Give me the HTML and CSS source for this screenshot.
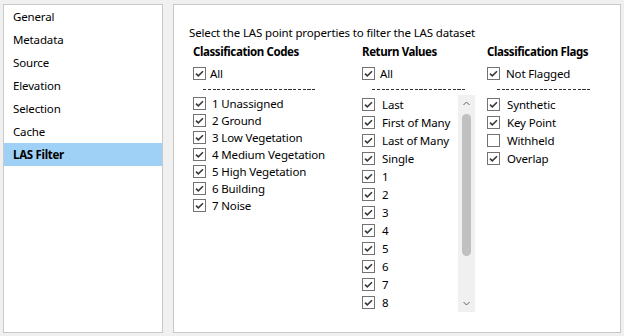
FILE: index.html
```html
<!DOCTYPE html>
<html>
<head>
<meta charset="utf-8">
<link rel="stylesheet" href="styles.css">
</head>
<body>
<div class="app">
  <nav class="sidebar">
    <ul class="nav">
      <li>General</li>
      <li>Metadata</li>
      <li>Source</li>
      <li>Elevation</li>
      <li>Selection</li>
      <li>Cache</li>
      <li class="active">LAS Filter</li>
    </ul>
  </nav>
  <main class="panel">
    <p class="intro">Select the LAS point properties to filter the LAS dataset</p>
    <div class="cols">
      <section class="col codes">
        <h3>Classification Codes</h3>
        <div class="item all"><span class="cb"><svg viewBox="0 0 11 11"><path d="M2 5.6 L4.3 7.9 L9 3.2"/></svg></span>All</div>
        <div class="sep"></div>
        <ul class="list">
          <li class="item"><span class="cb"><svg viewBox="0 0 11 11"><path d="M2 5.6 L4.3 7.9 L9 3.2"/></svg></span>1 Unassigned</li>
          <li class="item"><span class="cb"><svg viewBox="0 0 11 11"><path d="M2 5.6 L4.3 7.9 L9 3.2"/></svg></span>2 Ground</li>
          <li class="item"><span class="cb"><svg viewBox="0 0 11 11"><path d="M2 5.6 L4.3 7.9 L9 3.2"/></svg></span>3 Low Vegetation</li>
          <li class="item"><span class="cb"><svg viewBox="0 0 11 11"><path d="M2 5.6 L4.3 7.9 L9 3.2"/></svg></span>4 Medium Vegetation</li>
          <li class="item"><span class="cb"><svg viewBox="0 0 11 11"><path d="M2 5.6 L4.3 7.9 L9 3.2"/></svg></span>5 High Vegetation</li>
          <li class="item"><span class="cb"><svg viewBox="0 0 11 11"><path d="M2 5.6 L4.3 7.9 L9 3.2"/></svg></span>6 Building</li>
          <li class="item"><span class="cb"><svg viewBox="0 0 11 11"><path d="M2 5.6 L4.3 7.9 L9 3.2"/></svg></span>7 Noise</li>
        </ul>
      </section>
      <section class="col returns">
        <h3>Return Values</h3>
        <div class="item all"><span class="cb"><svg viewBox="0 0 11 11"><path d="M2 5.6 L4.3 7.9 L9 3.2"/></svg></span>All</div>
        <div class="sep"></div>
        <div class="scrollbox">
          <ul class="list">
            <li class="item"><span class="cb"><svg viewBox="0 0 11 11"><path d="M2 5.6 L4.3 7.9 L9 3.2"/></svg></span>Last</li>
            <li class="item"><span class="cb"><svg viewBox="0 0 11 11"><path d="M2 5.6 L4.3 7.9 L9 3.2"/></svg></span>First of Many</li>
            <li class="item"><span class="cb"><svg viewBox="0 0 11 11"><path d="M2 5.6 L4.3 7.9 L9 3.2"/></svg></span>Last of Many</li>
            <li class="item"><span class="cb"><svg viewBox="0 0 11 11"><path d="M2 5.6 L4.3 7.9 L9 3.2"/></svg></span>Single</li>
            <li class="item"><span class="cb"><svg viewBox="0 0 11 11"><path d="M2 5.6 L4.3 7.9 L9 3.2"/></svg></span>1</li>
            <li class="item"><span class="cb"><svg viewBox="0 0 11 11"><path d="M2 5.6 L4.3 7.9 L9 3.2"/></svg></span>2</li>
            <li class="item"><span class="cb"><svg viewBox="0 0 11 11"><path d="M2 5.6 L4.3 7.9 L9 3.2"/></svg></span>3</li>
            <li class="item"><span class="cb"><svg viewBox="0 0 11 11"><path d="M2 5.6 L4.3 7.9 L9 3.2"/></svg></span>4</li>
            <li class="item"><span class="cb"><svg viewBox="0 0 11 11"><path d="M2 5.6 L4.3 7.9 L9 3.2"/></svg></span>5</li>
            <li class="item"><span class="cb"><svg viewBox="0 0 11 11"><path d="M2 5.6 L4.3 7.9 L9 3.2"/></svg></span>6</li>
            <li class="item"><span class="cb"><svg viewBox="0 0 11 11"><path d="M2 5.6 L4.3 7.9 L9 3.2"/></svg></span>7</li>
            <li class="item"><span class="cb"><svg viewBox="0 0 11 11"><path d="M2 5.6 L4.3 7.9 L9 3.2"/></svg></span>8</li>
          </ul>
          <div class="scrollbar">
            <svg class="arrow" viewBox="0 0 17 17"><path d="M5.5 10 L8.5 7 L11.5 10"/></svg>
            <div class="track"><div class="thumb"></div></div>
            <svg class="arrow" viewBox="0 0 17 17"><path d="M5.5 7 L8.5 10 L11.5 7"/></svg>
          </div>
        </div>
      </section>
      <section class="col flags">
        <h3>Classification Flags</h3>
        <div class="item all"><span class="cb"><svg viewBox="0 0 11 11"><path d="M2 5.6 L4.3 7.9 L9 3.2"/></svg></span>Not Flagged</div>
        <div class="sep"></div>
        <ul class="list">
          <li class="item"><span class="cb"><svg viewBox="0 0 11 11"><path d="M2 5.6 L4.3 7.9 L9 3.2"/></svg></span>Synthetic</li>
          <li class="item"><span class="cb"><svg viewBox="0 0 11 11"><path d="M2 5.6 L4.3 7.9 L9 3.2"/></svg></span>Key Point</li>
          <li class="item"><span class="cb"></span>Withheld</li>
          <li class="item"><span class="cb"><svg viewBox="0 0 11 11"><path d="M2 5.6 L4.3 7.9 L9 3.2"/></svg></span>Overlap</li>
        </ul>
      </section>
    </div>
  </main>
</div>
</body>
</html>
```
FILE: styles.css
```css
* { box-sizing: border-box; }
html, body { margin: 0; padding: 0; }
body {
  background: #f0f0f0;
  font-family: "Segoe UI", "Noto Sans", sans-serif;
  font-size: 11.5px;
  letter-spacing: -0.15px;
  color: #000;
  width: 624px;
  height: 336px;
  overflow: hidden;
}
ul { list-style: none; margin: 0; padding: 0; }
h3, p { margin: 0; }

.app {
  display: flex;
  gap: 10px;
  padding: 4px 0 0 3px;
}

.sidebar {
  width: 160px;
  height: 329px;
  background: #fff;
  border: 1px solid #c8c8c8;
}
.nav li {
  height: 23px;
  line-height: 23px;
  padding-left: 9px;
}
.nav li.active {
  background: #9fd0f5;
  font-weight: bold;
  letter-spacing: -0.3px;
}

.panel {
  width: 448px;
  height: 329px;
  background: #fff;
  border: 1px solid #c8c8c8;
  padding: 20px 0 0 15px;
}
.intro { line-height: 16px; }

.cols {
  display: grid;
  grid-template-columns: 169px 125px 1fr;
  margin: 3px 0 0 4px;
}
.col h3 {
  font-size: 11.5px;
  font-weight: bold;
  letter-spacing: -0.4px;
  line-height: 16px;
  margin-bottom: 4px;
}
.item {
  display: flex;
  align-items: center;
  height: 18px;
  white-space: nowrap;
}
.cb {
  flex: none;
  width: 13px;
  height: 13px;
  border: 1px solid #737373;
  background: #fff;
  margin-right: 6px;
  display: flex;
  align-items: center;
  justify-content: center;
}
.cb svg {
  width: 11px;
  height: 11px;
  fill: none;
  stroke: #3a3a3a;
  stroke-width: 1.6;
}
.codes .all .cb { margin-right: 4px; }
.returns .all .cb { margin-right: 5px; }

.sep {
  height: 1px;
  margin: 7px 0 5px 10px;
  background: repeating-linear-gradient(90deg, #333 0 3px, transparent 3px 4.75px);
}
.codes .sep { width: 114px; }
.returns .sep { width: 93px; }
.flags .sep { width: 94px; }

.codes .list .item { height: 17px; }
.codes .list { margin-top: 1px; }

.returns .list .item .cb { margin-right: 7px; }
.flags .list .item .cb { margin-right: 7px; }

.scrollbox {
  display: flex;
  height: 217px;
  overflow: hidden;
}
.scrollbox .list { width: 96px; }
.scrollbar {
  width: 17px;
  background: #f0f0f0;
  display: flex;
  flex-direction: column;
}
.arrow {
  width: 17px;
  height: 17px;
  fill: none;
  stroke: #606060;
  stroke-width: 1;
}
.track {
  flex: 1;
  display: flex;
  justify-content: center;
  padding: 2px 0 0 0;
}
.thumb {
  width: 9px;
  height: 142px;
  background: #c0c0c0;
  border-radius: 4.5px;
}
```
